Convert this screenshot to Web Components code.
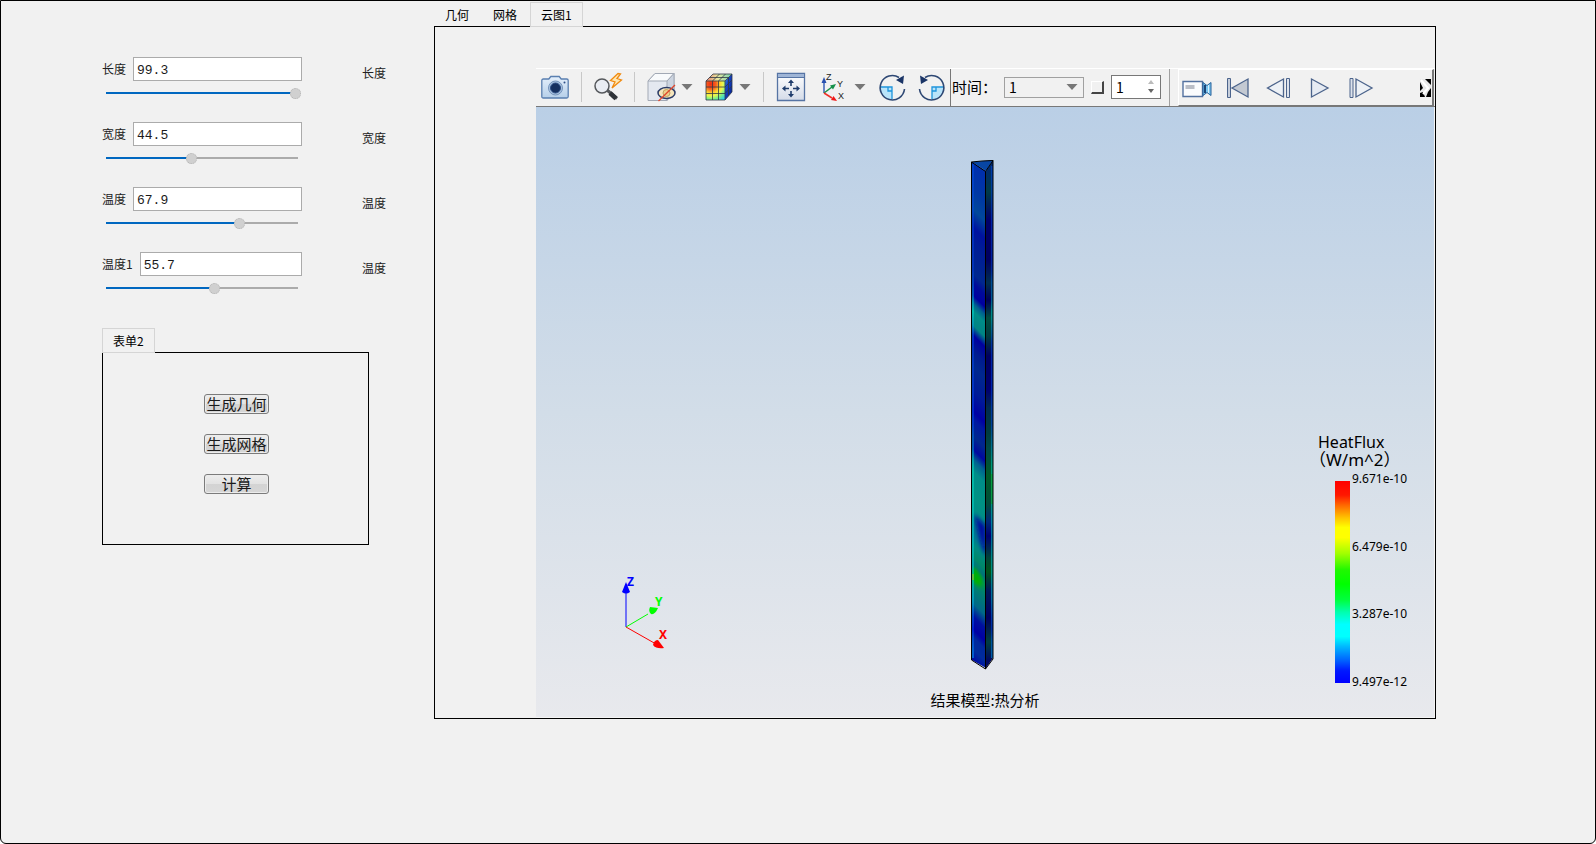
<!DOCTYPE html>
<html lang="zh-CN">
<head>
<meta charset="utf-8">
<title>热分析</title>
<style>
  html, body { margin: 0; height: 100%; background: #fff; }
  body { font: 12px/18px "Liberation Sans", "Noto Sans CJK SC", sans-serif; color: #000; }
</style>
</head>
<body>
<analysis-app></analysis-app>

<script>
const CJK = '"Noto Sans CJK SC", "Noto Sans", sans-serif';

class BaseElement extends HTMLElement {
  connectedCallback() {
    if (this.shadowRoot) return;
    this.attachShadow({ mode: 'open' }).innerHTML = this.render();
    this.ready();
  }
  ready() {}
}

/* Labelled number with a slider underneath and a caption on the right */
customElements.define('param-field', class extends BaseElement {
  render() {
    const a = n => this.getAttribute(n);
    return `<style>
      :host { display: flex; align-items: flex-start; gap: 60px; height: 42px; font: 12px/18px ${CJK}; color: #222; }
      .main { flex: none; width: 200px; }
      .line { display: flex; align-items: center; gap: 7px; height: 24px; }
      .text { flex: 1; min-width: 0; box-sizing: border-box; height: 24px; margin: 0; padding: 2px 3px 0;
        border: 1px solid #ababab; background: #fff; color: #1a1a1a; outline: 0;
        font: 13px/20px "Liberation Mono", monospace; }
      .range { appearance: none; display: block; box-sizing: border-box; width: 203px; height: 12px; margin: 6px 0 0 -2px;
        background: linear-gradient(to right, #0067c0 var(--at), #ababab var(--at)) 6px 5px / 192px 2px no-repeat; outline: 0; }
      .range::-webkit-slider-thumb { appearance: none; width: 11px; height: 11px; border-radius: 50%;
        background: #d0d0d0; border: 1px dotted #b4b4b4; }
      .note { margin-top: 7px; white-space: nowrap; }
    </style>
    <div class="main">
      <div class="line"><label for="v">${a('label')}</label><input class="text" id="v" type="text" value="${a('value')}"></div>
      <input class="range" type="range" min="0" max="100" value="${a('position')}" style="--at:${a('position')}%" aria-label="${a('label')}">
    </div>
    <label class="note" for="v">${a('note')}</label>`;
  }
  ready() {
    const range = this.shadowRoot.querySelector('.range');
    const text = this.shadowRoot.querySelector('.text');
    range.addEventListener('input', () => {
      range.style.setProperty('--at', range.value + '%');
      text.value = Number(range.value).toFixed(1);
    });
  }
});

/* Tabs over a framed body; the last tab is the open one */
customElements.define('tab-frame', class extends BaseElement {
  render() {
    const tabs = this.getAttribute('tabs').split(',');
    return `<style>
      :host { display: flex; flex-direction: column; font: 12px/18px ${CJK}; }
      .tabs { display: flex; gap: 2px; margin-bottom: -1px; }
      button { height: 25px; box-sizing: border-box; margin: 0; padding: 1px 10px 0; border: 1px solid transparent;
        background: none; color: #000; font: inherit; }
      button[aria-selected=true] { position: relative; border-color: #d5d5d5; background: #f1f1f1; }
      .body { flex: 1; display: flex; flex-direction: column; min-height: 0; border: 1px solid #000; }
    </style>
    <div class="tabs" role="tablist">${tabs.map((t, i) =>
      `<button role="tab" aria-selected="${i === tabs.length - 1}">${t}</button>`).join('')}</div>
    <div class="body" role="tabpanel"><slot></slot></div>`;
  }
});

customElements.define('form-button', class extends BaseElement {
  render() {
    return `<style>
      :host { display: block; }
      button { display: block; width: 65px; height: 20px; box-sizing: border-box; margin: 0; padding: 0;
        border: 1px solid #7b7b7b; border-radius: 3px; box-shadow: inset 0 0 0 1px #ececec;
        background: linear-gradient(#ededed, #e2e2e2 50%, #d3d3d3 50%, #d6d6d6);
        color: #1a1a1a; font: 15px/18px ${CJK}; white-space: nowrap; }
      span { display: flex; justify-content: center; }
    </style><button><span><slot></slot></span></button>`;
  }
});

const ICONS = {
  camera: `<defs><linearGradient id="c" x2="0" y2="1"><stop stop-color="#e4effb"/><stop offset="1" stop-color="#b6cfe9"/></linearGradient></defs>
    <path d="M.8 7.500q0-1.500 1.500-1.500h5.500l2-2.500h8.400l2 2.500h5.500q1.500 0 1.500 1.500v16q0 1.500-1.500 1.500h-23.400q-1.500 0-1.500-1.500z" fill="url(#c)" stroke="#5a7fb0" stroke-width="1.300"/>
    <circle cx="14.500" cy="15" r="7" fill="#a9c3e0" stroke="#7593bb"/><circle cx="14.500" cy="15" r="5" fill="#16305f" stroke="#2e4f86"/><circle cx="23.500" cy="9.500" r="1" fill="#2e4f86"/>`,
  search: `<path d="M13 17l10 8.500" stroke="#55585c" stroke-width="3"/><path d="M16 20l6 5.500" stroke="#2f3338" stroke-width="4.500"/>
    <circle cx="8" cy="13" r="7" fill="#e9ecf2" stroke="#55585c" stroke-width="1.500"/>
    <path d="M24 .5l-7.500 7 4.500 1.500-3 6 9.500-8-4.500-1.500 3.500-4.500z" fill="#ffe6b0" stroke="#f08a10" stroke-width="1.300"/>`,
  hide: `<path d="M1 8l7-7.500h19v17.500l-7 9.500H1z" fill="#e4e8f0" stroke="#a2a9b5"/><path d="M1 8l7-7.500h19L20 8z" fill="#f8fafc" stroke="#a2a9b5"/>
    <path d="M20 8v19.500l7-9.500V.5z" fill="#ccd4e0" stroke="#a2a9b5"/>
    <ellipse cx="19.500" cy="20" rx="8.500" ry="5.500" fill="#f6e6bd" stroke="#2c3c68" stroke-width="1.500"/><circle cx="19.500" cy="20" r="3.500" fill="#efd08b" stroke="#c0a060"/>
    <path d="M11.500 28L28 12" stroke="#e0452c" stroke-width="1.300"/>`,
  cube: `<defs><radialGradient id="h" gradientUnits="userSpaceOnUse" cx="6" cy="11" r="20"><stop stop-color="#f02810"/><stop offset=".25" stop-color="#f86020"/><stop offset=".45" stop-color="#ffd830"/><stop offset=".6" stop-color="#e8f850"/><stop offset=".75" stop-color="#80f080"/><stop offset="1" stop-color="#20c8f8"/></radialGradient>
    <linearGradient id="s" x2="1" y2="1"><stop stop-color="#50b0e0"/><stop offset=".35" stop-color="#1848c8"/><stop offset="1" stop-color="#001888"/></linearGradient>
    <linearGradient id="t" x2="1"><stop stop-color="#e08070"/><stop offset=".45" stop-color="#e8e8a0"/><stop offset="1" stop-color="#70d0b0"/></linearGradient></defs>
    <path d="M1 8h19v19H1z" fill="url(#h)"/><path d="M20 8l7-7v18l-7 8z" fill="url(#s)"/><path d="M1 8l7-7h19l-7 7z" fill="url(#t)"/>
    <path d="M1 8h19v19H1zM1 14h19l7-7M1 20.500h19l7-7.500M7.500 8v19M13.500 8v19M1 8l7-7h19v18l-7 8M20 8l7-7M7.500 8l7-7M13.500 8l7-7M4.500 4.500h19v18" fill="none" stroke="#303848" stroke-width=".8"/>`,
  fit: `<defs><linearGradient id="f" x2="0" y2="1"><stop stop-color="#fff"/><stop offset="1" stop-color="#d4dbe8"/></linearGradient></defs>
    <path d="M.5 .5h27v27H.5z" fill="url(#f)" stroke="#5674a4" stroke-width="1.300"/><path d="M1 1h26v3H1z" fill="#9fb5d6"/><path d="M1 4.500h26" stroke="#5674a4"/>
    <path d="M14 9v4M14 18v4M8 15.500h4M16 15.500h4" stroke="#1f3c6c" stroke-width="1.600"/>
    <path d="M14 6.500l3 3.500h-6zM14 24.500l3-3.500h-6zM5 15.500l3.500-3v6zM23 15.500l-3.500-3v6z" fill="#1f3c6c"/>`,
  axes: `<path d="M5 20V8" stroke="#3b62b8" stroke-width="1.500"/><path d="M5 4l2.500 6h-5z" fill="#2850b0"/>
    <path d="M5 20l8-6" stroke="#159048" stroke-width="1.500"/><path d="M17 11l-6 1.500 3 4z" fill="#159048"/>
    <path d="M5 20l8 5" stroke="#f03028" stroke-width="1.500"/><path d="M18 28l-3.500-5-2.500 4z" fill="#f01818"/>
    <g font-family="Liberation Sans, sans-serif" font-size="9" fill="#222"><text x="7" y="7">Z</text><text x="18" y="14">Y</text><text x="19" y="26">X</text></g>`,
  turnRight: `<path d="M2 14.500h12v12A12 12 0 0 1 2 14.500z" fill="#b9e4fa"/><path d="M2 14h12v12M10 14v4h4" fill="none" stroke="#1c94dc" stroke-width="1.300"/>
    <path d="M26.500 16a12.200 12.200 0 1 1-5.500-11.500" fill="none" stroke="#2d4773" stroke-width="1.600"/><path d="M26 2.500l-1 8.500-7-4z" fill="#1a3466"/>`,
  turnLeft: `<path d="M26 14.500H14v12A12 12 0 0 0 26 14.500z" fill="#b9e4fa"/><path d="M26 14H14v12M18 14v4h-4" fill="none" stroke="#1c94dc" stroke-width="1.300"/>
    <path d="M1.500 16A12.200 12.200 0 1 0 7 4.500" fill="none" stroke="#2d4773" stroke-width="1.600"/><path d="M2 2.500l1 8.500 7-4z" fill="#1a3466"/>`,
  video: `<path d="M0 7.500h19.500v15H0z" fill="#fafbfd" stroke="#53719f" stroke-width="1.400"/><path d="M2.500 11h9v4h-9z" fill="#b9bdc6"/>
    <path d="M20 8.500l4 3 4-3v13l-4-3-4 3z" fill="#79c4ee" stroke="#27619a"/><path d="M22 11v8" stroke="#1c4678" stroke-width="2"/><path d="M25.500 11v8" stroke="#d8f0fc" stroke-width="1"/>`,
  first: `<path d="M3.500 4.500h3v19h-3z" fill="#c6cedb" stroke="#4c648c"/><path d="M24 5v18L8 14z" fill="#c3c9d2" stroke="#4c648c" stroke-width="1.300"/>`,
  back: `<path d="M18.500 5v18L2.500 14z" fill="#edf1f6" stroke="#4c648c" stroke-width="1.300"/><path d="M21.500 4.500h3v19h-3z" fill="#dce2ec" stroke="#4c648c"/>`,
  play: `<path d="M5.500 5v18L22 14z" fill="#e6ebf3" stroke="#4c648c" stroke-width="1.300"/>`,
  next: `<path d="M3 4.500h3v19H3z" fill="#dce2ec" stroke="#4c648c"/><path d="M9 5v18l16-9z" fill="#edf1f6" stroke="#4c648c" stroke-width="1.300"/>`,
  down: `<path d="M.5 4h11L6 10z" fill="#777"/>`
};

customElements.define('icon-button', class extends BaseElement {
  render() {
    const name = this.getAttribute('icon');
    const [w, h, top] = name === 'down' ? [12, 14, 0] : name === 'axes' ? [28, 32, -2] : [28, 28, 0];
    return `<style>
      :host { display: block; flex: none; }
      button { display: flex; justify-content: center; width: 100%; margin: 0; padding: 0; border: 0; background: none; }
      svg { display: block; flex: none; overflow: visible; }
    </style>
    <button aria-label="${this.getAttribute('label')}"><svg width="${w}" height="${h}" viewBox="0 ${top} ${w} ${h}">${ICONS[name]}</svg></button>`;
  }
});

customElements.define('result-toolbar', class extends BaseElement {
  render() {
    return `<style>
      :host { display: flex; height: 39px; box-sizing: border-box; border-top: 1px solid #fff; border-bottom: 1px solid #787878;
        background: #f1f1f1; font: 15px/20px ${CJK}; }
      .group { display: flex; align-items: center; padding-bottom: 1px; }
      .view { gap: 12px; padding-left: 5px; padding-right: 4px; border-right: 1px solid #777; }
      .view icon-button { width: 28px; }
      .view icon-button.wide { width: 30px; }
      .view icon-button[icon=down] { width: 12px; margin-left: -6px; }
      .rule { width: 1px; height: 30px; background: #c8c8c8; }
      .time { padding-left: 1px; padding-right: 8px; gap: 7px; border-right: 1px solid #a0a0a0; margin-right: 8px; }
      .time label { width: 45px; white-space: nowrap; }
      .combo, .spin { position: relative; display: flex; }
      select { appearance: none; width: 80px; height: 21px; box-sizing: border-box; margin: 0; padding: 0 4px; border: 1px solid #a0a0a0;
        border-radius: 0; background: #f1f1f1; color: #000; font: 14px/19px ${CJK}; opacity: 1; }
      .combo svg { position: absolute; right: 6px; top: 3px; pointer-events: none; }
      .check { appearance: none; width: 13px; height: 13px; margin: 0; border: 1px solid #fff; border-right: 2px solid #444;
        border-bottom: 2px solid #444; background: #f1f1f1; }
      .num { appearance: textfield; width: 50px; height: 24px; box-sizing: border-box; margin: 0; padding: 0 4px; border: 1px solid #777;
        border-radius: 0; background: #fff; color: #000; font: 14px/20px ${CJK}; }
      .num::-webkit-inner-spin-button { display: none; }
      .spin svg { position: absolute; right: 7px; top: 5px; pointer-events: none; }
      .player { flex: 1; min-width: 0; gap: 11px; padding-left: 3px; padding-bottom: 0; border: 1px solid #fff; border-right: 2px solid #777;
        border-bottom: 1px solid #777; margin-right: 1px; }
      .player icon-button { width: 30px; }
      .more { margin: 0 1px 0 auto; padding: 0; border: 0; background: none; }
      svg { display: block; }
    </style>
    <div class="group view">
      <icon-button icon="camera" label="截图"></icon-button><span class="rule"></span>
      <icon-button icon="search" label="查询"></icon-button><span class="rule"></span>
      <icon-button icon="hide" label="隐藏"></icon-button><icon-button icon="down" label="隐藏选项"></icon-button>
      <icon-button icon="cube" label="云图"></icon-button><icon-button icon="down" label="云图选项"></icon-button><span class="rule"></span>
      <icon-button class="wide" icon="fit" label="适应窗口"></icon-button>
      <icon-button class="wide" icon="axes" label="视角"></icon-button><icon-button icon="down" label="视角选项"></icon-button>
      <icon-button icon="turnRight" label="顺时针旋转"></icon-button>
      <icon-button icon="turnLeft" label="逆时针旋转"></icon-button>
    </div>
    <div class="group time">
      <label for="time">时间：</label>
      <span class="combo"><select id="time"><option>1</option></select>
        <svg width="12" height="14" viewBox="0 0 12 14">${ICONS.down}</svg></span>
      <input class="check" type="checkbox" aria-label="循环">
      <span class="spin"><input class="num" type="number" value="1" min="1" aria-label="步长">
        <svg width="6" height="14" viewBox="0 0 6 14"><path d="M0 4h6L3 0z" fill="#bbb"/><path d="M0 9h6l-3 4z" fill="#666"/></svg></span>
    </div>
    <div class="group player">
      <icon-button icon="video" label="录像"></icon-button>
      <icon-button icon="first" label="第一帧"></icon-button>
      <icon-button icon="back" label="上一帧"></icon-button>
      <icon-button icon="play" label="播放"></icon-button>
      <icon-button icon="next" label="下一帧"></icon-button>
      <button class="more" aria-label="更多"><svg width="11" height="18" viewBox="0 0 11 18"><path d="M0 0h11v18H0z" fill="#e8e8e8"/>
        <path d="M0 3l3 6-3 3zM5 0h6v6L9 4zM0 14l3-1 2 5H0zM11 9v9H6l2-5z" fill="#000"/><path d="M1 1l7 8-5 6" fill="none" stroke="#fff" stroke-width="2"/></svg></button>
    </div>`;
  }
});

customElements.define('color-legend', class extends BaseElement {
  render() {
    return `<style>
      :host { display: block; width: 109px; font: 12px/14px "Noto Sans", sans-serif; color: #000; }
      h2 { margin: 0 0 13px; font: 16px/17px "Noto Sans", "Noto Sans CJK SC", sans-serif; white-space: nowrap; }
      h2 span { display: block; padding-left: 9px; }
      h2 .unit { padding-left: 0; font-size: 17px; }
      .scale { display: flex; gap: 2px; height: 202px; margin-left: 26px; }
      .bar { width: 15px; background: linear-gradient(#f00, #ff1800 7%, #ff6800 12%, #ffc000 18%, #ff0 23%, #ff0 28%, #a0ff00 36%, #20f800 44%, #0f0 51%, #00ff40 59%, #00ffb0 65%, #0ff 71%, #0ff 77%, #00b8ff 82%, #0060ff 89%, #0018ff 94%, #00f); }
      ul { display: flex; flex-direction: column; justify-content: space-between; margin: -9px 0 -6px; padding: 0; list-style: none; }
    </style>
    <h2><span>HeatFlux</span><span class="unit">（W/m^2）</span></h2>
    <div class="scale"><div class="bar"></div>
      <ul><li>9.671e-10</li><li>6.479e-10</li><li>3.287e-10</li><li>9.497e-12</li></ul></div>`;
  }
});

/* Heat flux on the slender bar: slanted colour bands on two side faces */
customElements.define('beam-model', class extends BaseElement {
  render() {
    const stops = list => list.map(([y, c]) => `<stop offset="${y / 512}" stop-color="${c}"/>`).join('');
    const left = [[5, '#0030ac'], [28, '#0038a4'], [48, '#00489a'], [66, '#0012a0'], [80, '#001c96'], [112, '#00288e'], [122, '#000a9a'], [134, '#0000a0'],
      [142, '#006090'], [150, '#008c88'], [164, '#008484'], [174, '#0000a0'], [190, '#001c90'], [205, '#00288e'], [230, '#001a98'], [250, '#0000a4'], [258, '#0018a0'],
      [275, '#00288e'], [288, '#0008a0'], [298, '#006090'], [310, '#008c88'], [335, '#009284'], [352, '#008c88'], [368, '#007890'], [375, '#007890'], [384, '#008a80'],
      [396, '#008868'], [404, '#006c88'], [412, '#00905c'], [422, '#008070'], [442, '#006888'], [455, '#0010a0'], [468, '#0000a4'], [476, '#00289c'], [488, '#002c9c'], [500, '#0008a4']];
    const right = [[10, '#002a70'], [34, '#003a48'], [62, '#00006a'], [102, '#000060'], [125, '#002e50'], [142, '#000058'], [160, '#004e40'], [178, '#003c40'], [198, '#000060'],
      [232, '#000070'], [250, '#002a50'], [275, '#003c40'], [290, '#004848'], [318, '#005c28'], [346, '#004c3c'], [364, '#002878'], [378, '#000070'], [400, '#004438'],
      [414, '#005418'], [432, '#001a58'], [460, '#000060'], [484, '#003e40'], [502, '#000a60']];
    return `<style>:host { display: block; } svg { display: block; }</style>
    <svg width="30" height="512" viewBox="0 0 30 512" role="img" aria-label="热分析模型">
      <defs>
        <linearGradient id="l" gradientUnits="userSpaceOnUse" x1="2" x2="2" y1="0" y2="512" gradientTransform="skewY(45)">${stops(left)}</linearGradient>
        <linearGradient id="r" gradientUnits="userSpaceOnUse" x1="18" x2="18" y1="0" y2="512">${stops(right)}</linearGradient>
        <linearGradient id="e" gradientUnits="userSpaceOnUse" x1="0" x2="0" y1="0" y2="512"><stop stop-color="#0050e8"/><stop offset=".22" stop-color="#0040e0"/><stop offset=".3" stop-color="#00e0d0"/><stop offset=".36" stop-color="#0048f0"/><stop offset=".52" stop-color="#0050f0"/><stop offset=".6" stop-color="#00e0c0"/><stop offset=".86" stop-color="#00c8e8"/><stop offset=".92" stop-color="#0040f8"/><stop offset="1" stop-color="#00d8ff"/></linearGradient>
        <filter id="b" x="-1" y="-1" width="3" height="3"><feGaussianBlur stdDeviation="2"/></filter>
        <clipPath id="k"><path d="M2 4l14 9v497L2 502z"/></clipPath>
      </defs>
      <path d="M2 4l14 9v497L2 502z" fill="url(#l)"/>
      <g clip-path="url(#k)">
        <path d="M4 356l12 12v30q-6-12-12-42z" fill="#0008a0" filter="url(#b)"/>
        <path d="M2 408l4 2 6 10v10l-10-6z" fill="#00b000" filter="url(#b)"/>
      </g>
      <path d="M16 13l7-11v498l-7 10z" fill="url(#r)"/>
      <path d="M2 4l11-1 10-1-7 11z" fill="#0846a4"/>
      <path d="M3 6v494M22 8v492" stroke="url(#e)" stroke-width="1"/>
      <path d="M3 416v6" stroke="#b0c000" stroke-width="1"/><path d="M22 316v30" stroke="#10a010" stroke-width="1"/>
      <path d="M1.500 4v498l14 9 7.500-10V2.500L12 3 1.500 4l14 9.500V511M15.500 13.500L23 2.500" fill="none" stroke="#000" stroke-width="1"/>
    </svg>`;
  }
});

customElements.define('axis-triad', class extends BaseElement {
  render() {
    return `<style>:host { display: block; } svg { display: block; } text { font: bold 12px "Noto Sans", sans-serif; }</style>
    <svg width="60" height="88" viewBox="0 -8 60 88" role="img" aria-label="坐标轴">
      <path d="M6 52V16" stroke="#00f"/><path d="M6 7l4 10q-4 3-8 0z" fill="#00f"/>
      <path d="M6 52l22-13" stroke="#0f0"/><path d="M38 33l-8-1q-2 4 1 7 4 1 7-6z" fill="#0f0"/>
      <path d="M6 52l30 17" stroke="#f00"/><path d="M44 73l-6-8q-4 0-5 5 3 4 11 3z" fill="#f00"/>
      <text x="7" y="11" fill="#00f">Z</text><text x="35" y="31" fill="#0f0">Y</text><text x="39" y="64" fill="#f00">X</text>
    </svg>`;
  }
});

customElements.define('result-view', class extends BaseElement {
  render() {
    return `<style>
      :host { display: grid; grid-template-columns: minmax(0, 1fr) auto minmax(0, 1fr); grid-template-rows: 1fr auto;
        box-sizing: border-box; padding: 51px 16px 7px 0; border: solid #f4f4f4; border-width: 0 1px 1px 0;
        background: linear-gradient(#bacfe6, #d2dde8 50%, #e8e9ed); }
      axis-triad { justify-self: start; align-self: end; margin: 0 0 15px 84px; }
      beam-model { justify-self: center; margin-left: 16px; }
      p { grid-column: 2; margin: 20px 0 0; font: 15px/20px ${CJK}; white-space: nowrap; padding-left: 16px; }
      color-legend { grid-column: 3; grid-row: 1 / 3; justify-self: end; align-self: end; margin-bottom: 27px; }
    </style>
    <axis-triad></axis-triad><beam-model></beam-model><p>结果模型:热分析</p><color-legend></color-legend>`;
  }
});

customElements.define('analysis-app', class extends BaseElement {
  render() {
    return `<style>
      :host { display: grid; grid-template-columns: 284px minmax(0, 1fr); column-gap: 48px; box-sizing: border-box; min-height: 100%;
        padding: 1px 159px 124px 101px; border: 1px solid #000; border-radius: 0 0 6px 6px; background: #f1f1f1; }
      form { display: flex; flex-direction: column; gap: 23px; margin: 55px 0 0; }
      form tab-frame { width: 267px; height: 217px; margin-top: 11px; }
      .actions { display: flex; flex-direction: column; align-items: center; gap: 20px; padding: 41px 0 0 2px; }
      .result { display: flex; flex-direction: column; flex: 1; padding: 41px 0 0 101px; }
      result-view { flex: 1; }
    </style>
    <form onsubmit="return false">
      <param-field label="长度" note="长度" value="99.3" position="99"></param-field>
      <param-field label="宽度" note="宽度" value="44.5" position="45"></param-field>
      <param-field label="温度" note="温度" value="67.9" position="70"></param-field>
      <param-field label="温度1" note="温度" value="55.7" position="57"></param-field>
      <tab-frame tabs="表单2"><div class="actions">
        <form-button>生成几何</form-button><form-button>生成网格</form-button><form-button>计算</form-button>
      </div></tab-frame>
    </form>
    <tab-frame tabs="几何,网格,云图1"><div class="result">
      <result-toolbar></result-toolbar><result-view></result-view>
    </div></tab-frame>`;
  }
});
</script>
</body>
</html>
